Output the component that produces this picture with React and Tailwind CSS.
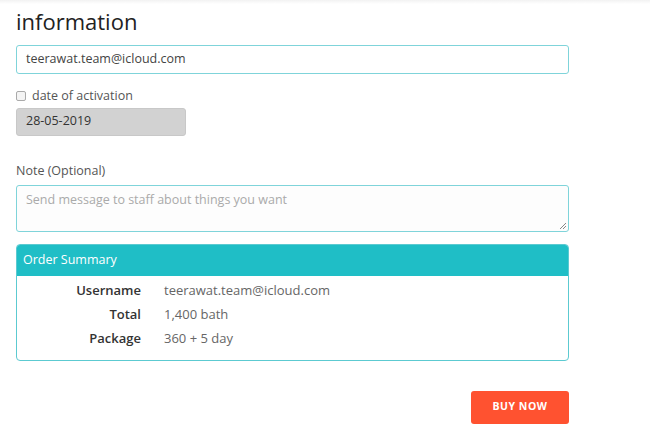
import React from "react";

function SummaryRow({ label, value }) {
  return (
    <div className="flex items-center h-6">
      <div className="w-[124px] text-right font-semibold text-[#333] text-[13px]">{label}</div>
      <div className="ml-[23px] text-[#666] text-[13px]">{value}</div>
    </div>
  );
}

export default function App() {
  return (
    <div
      className="w-[650px] h-[442px] bg-white overflow-hidden"
      style={{ fontFamily: '"Open Sans", "Liberation Sans", sans-serif' }}
    >
      <div className="h-[4px] bg-gradient-to-b from-[#f2f2f2] to-white" />
      <div className="pl-4 w-[569px]">
        <h2 className="text-[22px] font-medium text-[#222] leading-none mt-[6px]">information</h2>

        <div className="mt-[13px] h-[29px] border border-[#7fd4da] rounded-[3px] flex items-center px-[9px] text-[12.5px] text-[#444]">
          teerawat.team@icloud.com
        </div>

        <label className="flex items-center mt-[13px] text-[12.5px] text-[#555]">
          <span className="w-[10px] h-[10px] border border-[#aaa] rounded-[2px] bg-[#f4f4f4]" />
          <span className="ml-[6px]">date of activation</span>
        </label>

        <div className="mt-[2px] w-[170px] h-[28px] bg-[#d2d2d2] border border-[#c8c8c8] rounded-[3px] flex items-center px-[9px] text-[12.5px] text-[#333]">
          28-05-2019
        </div>

        <div className="mt-[26px] text-[12.5px] text-[#555]">Note (Optional)</div>

        <div className="relative mt-[4px] h-[47px] border border-[#7fd4da] rounded-[3px] bg-[#fdfdfd] px-[9px] pt-[5px] text-[12.5px] text-[#aaa]">
          Send message to staff about things you want
          <svg className="absolute right-[1px] bottom-[1px]" width="8" height="8" viewBox="0 0 8 8">
            <path d="M7 1L1 7M7 4L4 7" stroke="#888" strokeWidth="1" />
          </svg>
        </div>

        <div className="mt-[12px] border border-[#5ccad1] rounded-[4px] overflow-hidden">
          <div className="h-[31px] bg-[#1fbec6] flex items-center px-[6px] text-[12.5px] text-white">
            Order Summary
          </div>
          <div className="pt-[3px] pb-[9px]">
            <SummaryRow label="Username" value="teerawat.team@icloud.com" />
            <SummaryRow label="Total" value="1,400 bath" />
            <SummaryRow label="Package" value="360 + 5 day" />
          </div>
        </div>

        <div className="flex justify-end mt-[30px]">
          <button className="w-[98px] h-[33px] bg-[#ff5230] rounded-[3px] text-white text-[10.5px] font-bold tracking-wider">
            BUY NOW
          </button>
        </div>
      </div>
    </div>
  );
}
